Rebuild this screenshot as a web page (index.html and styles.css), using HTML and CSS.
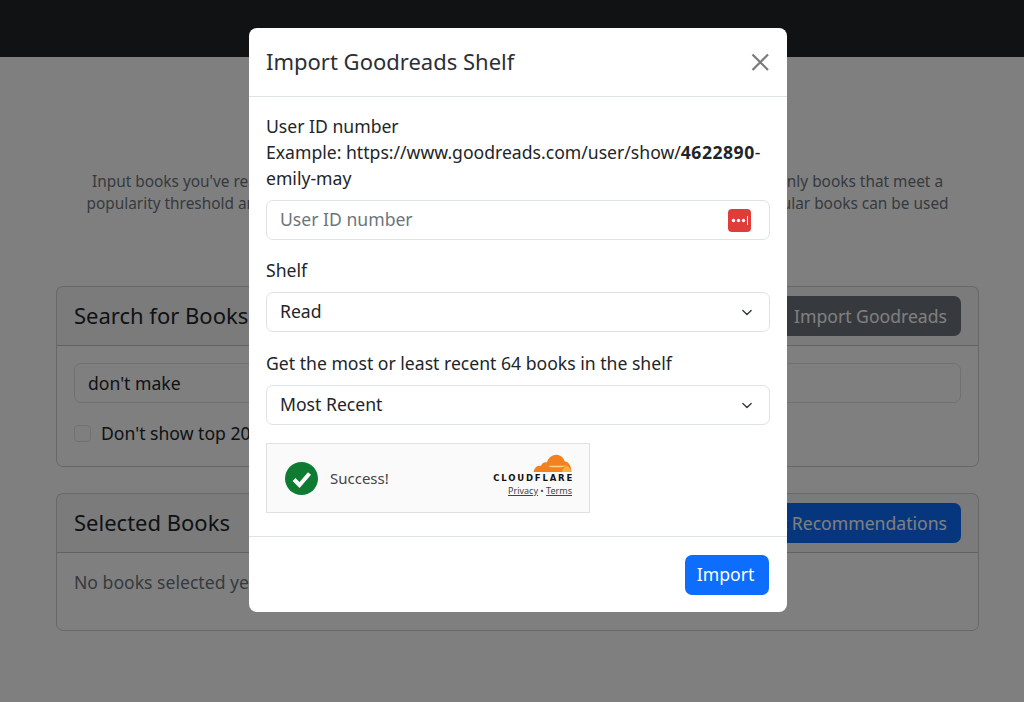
FILE: index.html
```html
<!DOCTYPE html>
<html lang="en">
<head>
	<meta charset="UTF-8">
	<title>Book Recommendations</title>
	<link rel="stylesheet" href="styles.css">
</head>
<body>
	<div class="navbar"></div>
	<div class="page">
		<p class="intro">Input books you've read and we will find other books you are likely to enjoy reading next time. Only books that meet a<br>popularity threshold are included in the final results by default, so that only a few of the less popular books can be used</p>
		<div class="card search-card">
			<div class="card-header">
				<h2>Search for Books</h2>
				<button class="btn btn-secondary">Import Goodreads</button>
			</div>
			<div class="card-body">
				<input class="field" type="text" value="don't make">
				<label class="check"><input type="checkbox">Don't show top 20 results</label>
			</div>
		</div>
		<div class="card selected-card">
			<div class="card-header">
				<h2>Selected Books</h2>
				<button class="btn btn-primary">Get Recommendations</button>
			</div>
			<div class="card-body">
				<p class="muted">No books selected yet</p>
			</div>
		</div>
	</div>

	<div class="backdrop"></div>
	<div class="modal-wrap">
		<div class="modal">
			<div class="modal-header">
				<h3>Import Goodreads Shelf</h3>
				<svg class="close" width="20" height="20" viewBox="0 0 20 20"><path d="M2.500 2.500L18 18M18 2.500L2.500 18" stroke="#7a7a7a" stroke-width="2.2" fill="none"/></svg>
			</div>
			<div class="modal-body">
				<div class="label">User ID number<br>Example: https://www.goodreads.com/user/show/<b>4622890</b>-emily-may</div>
				<div class="input-wrap">
					<input class="field" type="text" placeholder="User ID number">
					<svg class="lastpass" width="23" height="23" viewBox="0 0 23 23">
						<rect width="23" height="23" rx="4" fill="#df3d3a"/>
						<circle cx="5.500" cy="11.500" r="1.700" fill="#fff"/>
						<circle cx="10.500" cy="11.500" r="1.700" fill="#fff"/>
						<circle cx="15.500" cy="11.500" r="1.700" fill="#fff"/>
						<rect x="19" y="7" width="1" height="9" fill="#fff"/>
					</svg>
				</div>
				<div class="label gap">Shelf</div>
				<select class="field"><option>Read</option></select>
				<div class="label gap">Get the most or least recent 64 books in the shelf</div>
				<select class="field"><option>Most Recent</option></select>
				<div class="turnstile">
					<svg width="33" height="33" viewBox="0 0 33 33">
						<circle cx="16.500" cy="16.500" r="16.500" fill="#0f7a32"/>
						<path d="M9 17.500L14.500 23L24.500 11.500" stroke="#fff" stroke-width="4" fill="none"/>
					</svg>
					<span class="success">Success!</span>
					<div class="cf">
						<svg width="39" height="18" viewBox="0 0 40 19">
							<path d="M0 19C1 14 4 12 8 12.500C9 9 12 8 14 9C16 3 21 0 26 1C30 2 32 5 33 8C37 8 40 13 40 19Z" fill="#f48120"/>
							<path d="M16 12.500H36L29 14H18Z" fill="#fbd38d"/>
							<path d="M30 19C31 15 33 13 36 13C38 14 39.500 16 40 19Z" fill="#fbad41"/>
						</svg>
						<div class="cf-name">CLOUDFLARE</div>
						<div class="cf-links"><u>Privacy</u> • <u>Terms</u></div>
					</div>
				</div>
			</div>
			<div class="modal-footer">
				<button class="btn btn-import">Import</button>
			</div>
		</div>
	</div>
</body>
</html>
```

FILE: styles.css
```css
*{box-sizing:border-box;}
html,body{height:100%;}
body{margin:0;background:#fff;color:#212529;font-family:"Noto Sans","Open Sans",sans-serif;font-size:17.6px;line-height:26.4px;overflow:hidden;}
h2,h3,p{margin:0;font-weight:400;}
.navbar{height:57px;background:#212529;}
.page{width:923px;margin-left:56px;}
.intro{margin-top:114px;text-align:center;font-size:15.4px;line-height:22px;color:#6c757d;white-space:nowrap;}
.muted{color:#6c757d;}

.card{border:1px solid #d0d0d0;border-radius:7px;}
.search-card{margin-top:71px;height:181px;}
.selected-card{margin-top:26px;height:138px;}
.card-header{display:flex;justify-content:space-between;align-items:center;height:59px;padding:0 17px;background:rgba(0,0,0,.03);border-bottom:1px solid #c4c4c4;}
.card-header h2{font-size:22px;margin-top:-2px;}
.card-header .btn{padding:0 14px 0 18px;}
.card-body{padding:17px;}
.card-body .muted{margin-top:-1px;}
.card-body .field{padding-bottom:0;}
.check{display:flex;align-items:center;margin-top:17px;}
.check input{width:17px;height:17px;margin:0 10px 0 0;appearance:none;border:1px solid #dee2e6;border-radius:4px;background:#fff;}

.btn{height:40px;padding:0 16px 2px;border:0;border-radius:7px;color:#fff;font:inherit;}
.btn-secondary{background:#6c757d;}
.btn-primary{background:#0d6efd;}
.btn-import{width:84px;padding:0 3px 2px 0;background:#0d6efd;}

.field{display:block;width:100%;height:40px;padding:0 13px 2px;border:1px solid #dee2e6;border-radius:7px;background:#fff;color:#212529;font:inherit;appearance:none;}
input.field{padding-bottom:3px;}
.field::placeholder{color:#6c757d;opacity:1;}
select.field{background-image:url("data:image/svg+xml,%3csvg xmlns='http://www.w3.org/2000/svg' viewBox='0 0 16 16'%3e%3cpath fill='none' stroke='%23343a40' stroke-linecap='round' stroke-linejoin='round' stroke-width='2' d='m2 5 6 6 6-6'/%3e%3c/svg%3e");background-repeat:no-repeat;background-position:right 15px center;background-size:14px 11px;}

.backdrop{position:fixed;top:0;left:0;width:100%;height:100%;background:rgba(0,0,0,.5);}
.modal-wrap{position:fixed;top:0;left:0;width:100%;height:100%;display:flex;justify-content:center;align-items:flex-start;padding:28px 0 0 12px;}
.modal{width:538px;height:584px;background:#fff;border-radius:8px;}
.modal-header{display:flex;justify-content:space-between;align-items:center;height:69px;padding:0 17px;border-bottom:1px solid #dee2e6;}
.modal-header h3{font-size:22px;color:#2b2f33;margin-top:-2px;}
.modal-body{padding:16px 17px 0;height:440px;border-bottom:1px solid #dee2e6;}
.label{margin-bottom:9px;line-height:26px;}
.label b{letter-spacing:.5px;}
.label.gap{margin-top:17px;}
.field + .label.gap{margin-top:18px;}
.input-wrap{position:relative;}
.lastpass{position:absolute;top:9px;right:19px;}

.turnstile{display:flex;align-items:center;width:324px;height:70px;margin-top:18px;padding:0 17px 0 18px;background:#fafafa;border:1px solid #e0e0e0;}
.success{margin-left:12px;font-size:15px;color:#444;}
.cf{margin:-5px 0 0 auto;display:flex;flex-direction:column;align-items:flex-end;}
.cf svg{display:block;}
.cf-name{font-family:"DejaVu Sans",sans-serif;font-size:8.500px;line-height:10px;font-weight:700;letter-spacing:1.800px;color:#111;margin-top:1px;margin-right:-2px;}
.cf-links{font-size:9px;line-height:12px;color:#444;margin-top:2px;}

.modal-footer{display:flex;justify-content:flex-end;padding:18px 18px 18px 17px;}
```
